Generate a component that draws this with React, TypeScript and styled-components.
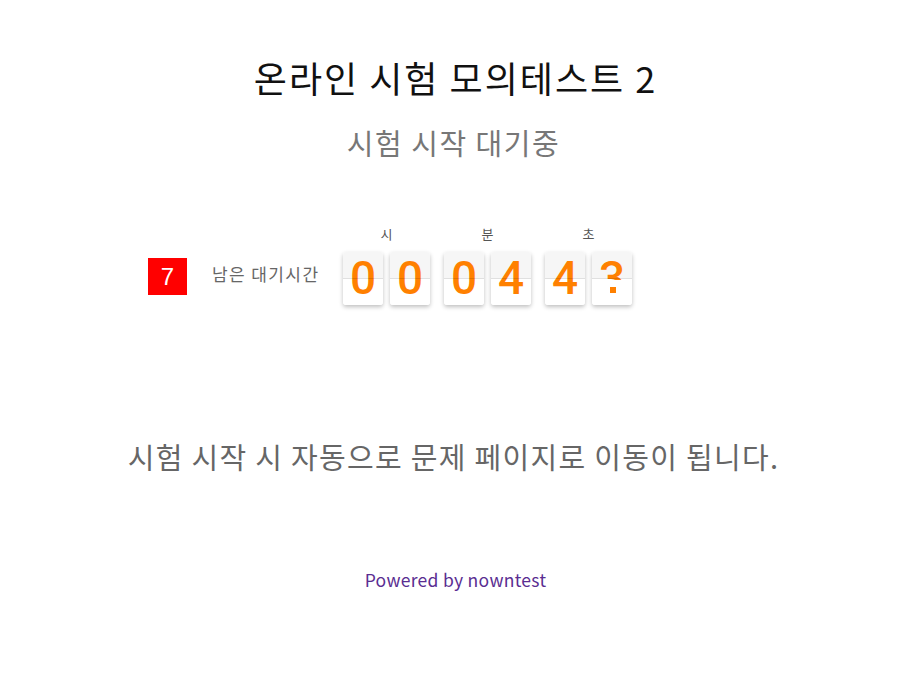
import styled, { createGlobalStyle } from "styled-components";

const GlobalStyle = createGlobalStyle`
    body {
        margin: 0;
        background: #fff;
        font-family: "Noto Sans CJK KR", "Noto Sans", sans-serif;
    }
`

const groups = [
    {label: "시", digits: ["0", "0"]},
    {label: "분", digits: ["0", "4"]},
    {label: "초", digits: ["4", "3"]},
];

export default function App() {
    return (
        <>
            <GlobalStyle/>
            <Page>
                <Title>온라인 시험 모의테스트 2</Title>
                <Subtitle>시험 시작 대기중</Subtitle>

                <TimerRow>
                    <Badge>7</Badge>
                    <TimerLabel>남은 대기시간</TimerLabel>
                    <Groups>
                        {groups.map((g, gi) => (
                            <Group key={g.label}>
                                <GroupLabel>{g.label}</GroupLabel>
                                <Cards>
                                    {g.digits.map((d, i) => {
                                        const flipping = gi === 2 && i === 1;
                                        return (
                                            <FlipCard key={i}>
                                                <Digit $flipping={flipping}>{d}</Digit>
                                                {flipping && <FlipDot/>}
                                            </FlipCard>
                                        );
                                    })}
                                </Cards>
                            </Group>
                        ))}
                    </Groups>
                </TimerRow>

                <Notice>시험 시작 시 자동으로 문제 페이지로 이동이 됩니다.</Notice>
                <Powered>Powered by nowntest</Powered>
            </Page>
        </>
    );
}

const Page = styled.div`
    display: flex;
    flex-direction: column;
    align-items: center;
    padding-top: 53px;
    height: 699px;
    box-sizing: border-box;
`

const Title = styled.h1`
    margin: 0;
    padding-right: 4px;
    font-size: 36px;
    font-weight: 400;
    letter-spacing: 2px;
    color: #111;
    line-height: 48px;
`

const Subtitle = styled.h2`
    margin: 21px 0 0;
    padding-right: 8px;
    font-size: 29px;
    font-weight: 400;
    letter-spacing: 1.5px;
    color: #777;
    line-height: 40px;
`

const TimerRow = styled.div`
    align-self: stretch;
    display: flex;
    align-items: flex-end;
    padding-left: 148px;
    margin-top: 64px;
`

const Badge = styled.div`
    width: 39px;
    height: 37px;
    background: #ff0000;
    color: #fff;
    font-family: "Liberation Sans", sans-serif;
    font-size: 24px;
    display: flex;
    align-items: center;
    justify-content: center;
    margin-bottom: 10px;
`

const TimerLabel = styled.div`
    margin-left: 25px;
    margin-bottom: 21px;
    font-size: 17px;
    line-height: 20px;
    color: #666;
    letter-spacing: 1.4px;
    width: 131px;
`

const Groups = styled.div`
    display: flex;
    gap: 14px;
`

const Group = styled.div`
    display: flex;
    flex-direction: column;
    align-items: center;
`

const GroupLabel = styled.div`
    font-size: 13px;
    color: #555;
    line-height: 16px;
    margin-bottom: 10px;
`

const Cards = styled.div`
    display: flex;
    gap: 7px;
`

const FlipCard = styled.div`
    position: relative;
    width: 40px;
    height: 53px;
    border-radius: 3px;
    box-shadow: 0 2px 4px rgba(0, 0, 0, 0.25);
    background: linear-gradient(#f6f6f6 0 50%, #fff 50% 100%);
    display: flex;
    align-items: center;
    justify-content: center;

    &::after {
        content: "";
        position: absolute;
        left: 0;
        right: 0;
        top: 26px;
        height: 1px;
        background: rgba(0, 0, 0, 0.12);
    }
`

const Digit = styled.span<{ $flipping?: boolean }>`
    font-family: Roboto, "Liberation Sans", sans-serif;
    font-size: 46px;
    font-weight: 500;
    line-height: 53px;
    color: #ff8000;
    ${p => p.$flipping ? "clip-path: inset(0 0 47% 0);" : ""}
`

const FlipDot = styled.span`
    position: absolute;
    left: 18px;
    top: 35px;
    width: 6px;
    height: 6px;
    background: #ff8000;
`

const Notice = styled.p`
    margin: 131px 0 0;
    padding-right: 8px;
    font-size: 29px;
    letter-spacing: 1.3px;
    color: #666;
    line-height: 40px;
`

const Powered = styled.div`
    margin-top: 92px;
    padding-right: 4px;
    font-size: 17.5px;
    letter-spacing: 0.3px;
    line-height: 24px;
    color: #5a2d91;
`
